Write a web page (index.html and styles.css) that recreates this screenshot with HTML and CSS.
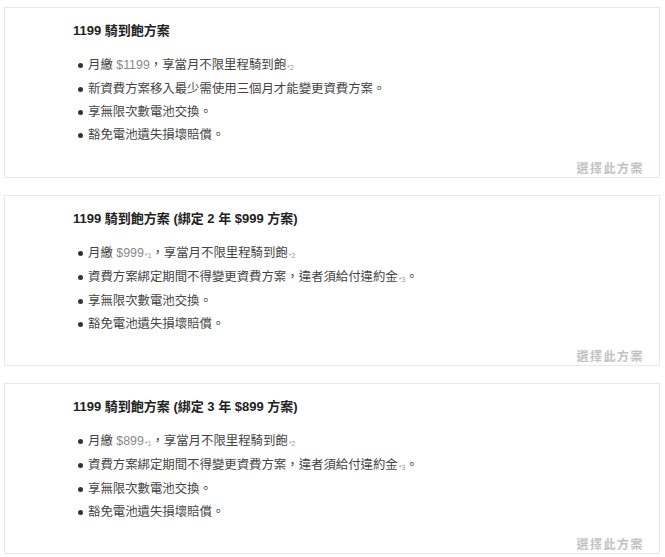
FILE: index.html
```html
<!DOCTYPE html>
<html lang="zh-Hant">
<head>
    <meta charset="UTF-8">
    <title>騎到飽方案</title>
    <link rel="stylesheet" href="styles.css">
</head>
<body>
    <div class="plans">
        <div class="plan">
            <h2>1199 騎到飽方案</h2>
            <ul>
                <li>月繳 <span class="price">$1199</span>，享當月不限里程騎到飽<sup>*2</sup></li>
                <li>新資費方案移入最少需使用三個月才能變更資費方案。</li>
                <li>享無限次數電池交換。</li>
                <li>豁免電池遺失損壞賠償。</li>
            </ul>
            <div class="choose">選擇此方案</div>
        </div>
        <div class="plan">
            <h2>1199 騎到飽方案 (綁定 2 年 $999 方案)</h2>
            <ul>
                <li>月繳 <span class="price">$999</span><sup>*1</sup>，享當月不限里程騎到飽<sup>*2</sup></li>
                <li>資費方案綁定期間不得變更資費方案，違者須給付違約金<sup>*3</sup>。</li>
                <li>享無限次數電池交換。</li>
                <li>豁免電池遺失損壞賠償。</li>
            </ul>
            <div class="choose">選擇此方案</div>
        </div>
        <div class="plan">
            <h2>1199 騎到飽方案 (綁定 3 年 $899 方案)</h2>
            <ul>
                <li>月繳 <span class="price">$899</span><sup>*1</sup>，享當月不限里程騎到飽<sup>*2</sup></li>
                <li>資費方案綁定期間不得變更資費方案，違者須給付違約金<sup>*3</sup>。</li>
                <li>享無限次數電池交換。</li>
                <li>豁免電池遺失損壞賠償。</li>
            </ul>
            <div class="choose">選擇此方案</div>
        </div>
    </div>
</body>
</html>
```

FILE: styles.css
```css
body {
    font-family: "Liberation Sans", "Noto Sans CJK TC", sans-serif;
    background-color: #fff;
    color: #333;
    margin: 0;
    padding: 0;
}
.plans {
    display: flex;
    flex-direction: column;
    gap: 17px;
    padding: 7px 5px 0 4px;
}
.plan {
    border: 1px solid #e8e8e8;
    padding: 15px 15px 0 68px;
    height: 171px;
    box-sizing: border-box;
    display: flex;
    flex-direction: column;
}
h2 {
    margin: 0;
    font-size: 13px;
    line-height: 16px;
    font-weight: bold;
    color: #222;
}
ul {
    margin: 15px 0 0 0;
    padding-left: 15px;
    list-style: none;
}
li {
    position: relative;
    font-size: 12.4px;
    line-height: 23px;
    color: #444;
}
li::before {
    content: "";
    position: absolute;
    left: -10px;
    top: 9px;
    width: 5px;
    height: 5px;
    border-radius: 50%;
    background: #333;
}
.price {
    color: #888;
}
sup {
    font-size: 7px;
    color: #999;
    vertical-align: baseline;
    position: relative;
    top: 1px;
    margin-left: 1px;
}
.choose {
    margin-top: auto;
    align-self: flex-end;
    font-size: 12px;
    line-height: 16px;
    font-weight: bold;
    letter-spacing: 1.5px;
    color: #c2c2c2;
}
```
